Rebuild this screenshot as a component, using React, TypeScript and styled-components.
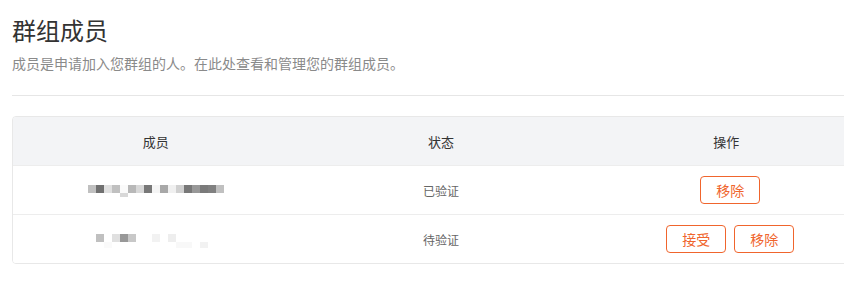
import React from 'react';
import styled, { createGlobalStyle } from 'styled-components';

const GlobalStyle = createGlobalStyle`
  html, body {
    margin: 0;
    padding: 0;
    background: #ffffff;
    overflow: hidden;
  }
  body {
    font-family: "Noto Sans CJK SC", "Noto Sans", "Liberation Sans", sans-serif;
  }
`;

const Page = styled.div`
  width: 858px;
  padding: 12px 0 0 12px;
`;

const Title = styled.h1`
  margin: 0;
  font-size: 24px;
  line-height: 36px;
  font-weight: 400;
  color: #333333;
`;

const Subtitle = styled.p`
  margin: 4px 0 0;
  font-size: 14px;
  line-height: 22px;
  color: #8a8a8a;
`;

const Divider = styled.hr`
  margin: 21px 0 20px;
  border: none;
  border-top: 1px solid #e6e6e6;
`;

const Table = styled.div`
  border: 1px solid #e8e8e8;
  border-radius: 4px;
  overflow: hidden;
`;

const Row = styled.div<{ $head?: boolean }>`
  display: grid;
  grid-template-columns: repeat(3, 1fr);
  align-items: center;
  height: 48px;
  background: ${(p) => (p.$head ? '#f3f4f6' : '#ffffff')};
  border-top: ${(p) => (p.$head ? 'none' : '1px solid #ededed')};
`;

const Cell = styled.div<{ $head?: boolean }>`
  display: flex;
  justify-content: center;
  align-items: center;
  font-size: ${(p) => (p.$head ? '13px' : '12px')};
  color: ${(p) => (p.$head ? '#333333' : '#666666')};
`;

const Button = styled.button`
  width: 60px;
  height: 28px;
  margin-left: 8px;
  padding: 0;
  border: 1px solid #f0652d;
  border-radius: 4px;
  background: #ffffff;
  color: #f0652d;
  font-family: inherit;
  font-size: 14px;
  cursor: pointer;
`;

// [x, y, grey level, height]
type Block = [number, number, string, number?];

// pixelated (masked) email addresses
const mosaic1: Block[] = [
  ...['c0', '70', 'e0', 'c0', 'fa', 'b8', 'd8', '78', 'f5', 'a8', 'f0', 'd0', '78', '98', '7a', '80', 'c0'].map(
    (c, i): Block => [i * 8, 4, c]
  ),
  [32, 12, 'd8', 4],
];

const mosaic2: Block[] = [
  [8, 4, 'c0'],
  [24, 4, 'e0'],
  [32, 4, '98'],
  [40, 4, 'c8'],
  [64, 4, 'f2'],
  [80, 4, 'ee'],
  [16, 12, 'fa', 6],
  [88, 12, 'f8', 6],
  [96, 12, 'f8', 6],
  [112, 12, 'f2', 6],
];

const gray = (c: string) => `#${c}${c}${c}`;

const MaskedEmail = ({ blocks }: { blocks: Block[] }) => (
  <svg width="136" height="18" viewBox="0 0 136 18">
    {blocks.map(([x, y, c, h], i) => (
      <rect key={i} x={x} y={y} width={8} height={h ?? 8} fill={gray(c)} />
    ))}
  </svg>
);

const members = [
  { blocks: mosaic1, status: '已验证', pending: false },
  { blocks: mosaic2, status: '待验证', pending: true },
];

export default function App() {
  return (
    <>
      <GlobalStyle />
      <Page>
        <Title>群组成员</Title>
        <Subtitle>成员是申请加入您群组的人。在此处查看和管理您的群组成员。</Subtitle>
        <Divider />
        <Table>
          <Row $head>
            <Cell $head>成员</Cell>
            <Cell $head>状态</Cell>
            <Cell $head>操作</Cell>
          </Row>
          {members.map((m, i) => (
            <Row key={i}>
              <Cell>
                <MaskedEmail blocks={m.blocks} />
              </Cell>
              <Cell>{m.status}</Cell>
              <Cell>
                {m.pending && <Button>接受</Button>}
                <Button>移除</Button>
              </Cell>
            </Row>
          ))}
        </Table>
      </Page>
    </>
  );
}
